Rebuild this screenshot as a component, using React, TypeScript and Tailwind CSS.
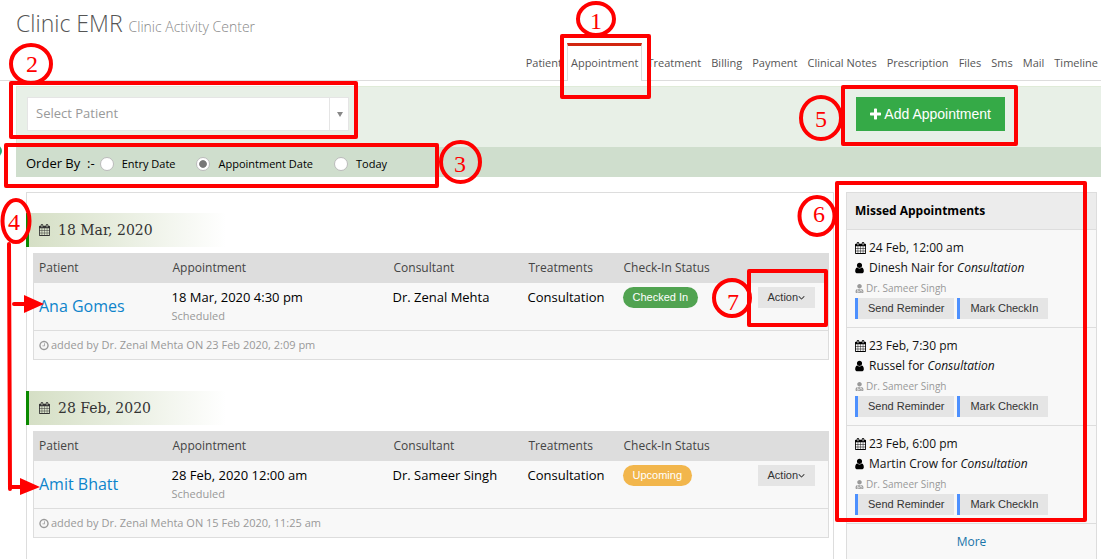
import { useState } from "react";
import { FaUserMd } from "react-icons/fa";

// Font Awesome 4 outlines, drawn on its 1792 unit grid
const icons = {
  calendar: {
    width: 1664,
    path: "M128 1664h288v-288h-288v288zm352 0h320v-288h-320v288zm-352-352h288v-320h-288v320zm352 0h320v-320h-320v320zm-352-384h288v-288h-288v288zm736 736h320v-288h-320v288zm-384-736h320v-288h-320v288zm768 736h288v-288h-288v288zm-384-352h320v-320h-320v320zm-352-864v-288q0-13-9.5-22.5t-22.5-9.5h-64q-13 0-22.5 9.5t-9.5 22.5v288q0 13 9.5 22.5t22.5 9.5h64q13 0 22.5-9.5t9.5-22.5zm736 864h288v-320h-288v320zm-384-384h320v-288h-320v288zm384 0h288v-288h-288v288zm32-480v-288q0-13-9.5-22.5t-22.5-9.5h-64q-13 0-22.5 9.5t-9.5 22.5v288q0 13 9.5 22.5t22.5 9.5h64q13 0 22.5-9.5t9.5-22.5zm384-64v1280q0 52-38 90t-90 38h-1408q-52 0-90-38t-38-90v-1280q0-52 38-90t90-38h128v-96q0-66 47-113t113-47h64q66 0 113 47t47 113v96h384v-96q0-66 47-113t113-47h64q66 0 113 47t47 113v96h128q52 0 90 38t38 90z",
  },
  user: {
    width: 1280,
    path: "M1280 1399q0 109-62.5 187t-150.5 78h-854q-88 0-150.5-78t-62.5-187q0-85 8.5-160.5t31.5-152 58.5-131 94-89 134.5-34.5q131 128 313 128t313-128q76 0 134.5 34.5t94 89 58.5 131 31.5 152 8.5 160.5zm-256-887q0 159-112.5 271.5t-271.5 112.5-271.5-112.5-112.5-271.5 112.5-271.5 271.5-112.5 271.5 112.5 112.5 271.5z",
  },
  plus: {
    width: 1408,
    path: "M1408 800v192q0 40-28 68t-68 28h-416v416q0 40-28 68t-68 28h-192q-40 0-68-28t-28-68v-416h-416q-40 0-68-28t-28-68v-192q0-40 28-68t68-28h416v-416q0-40 28-68t68-28h192q40 0 68 28t28 68v416h416q40 0 68 28t28 68z",
  },
  clock: {
    width: 1536,
    path: "M896 544v448q0 14-9 23t-23 9h-320q-14 0-23-9t-9-23v-64q0-14 9-23t23-9h224v-352q0-14 9-23t23-9h64q14 0 23 9t9 23zm416 352q0-148-73-273t-198-198-273-73-273 73-198 198-73 273 73 273 198 198 273 73 273-73 198-198 73-273zm224 0q0 209-103 385.5t-279.5 279.5-385.5 103-385.5-103-279.5-279.5-103-385.5 103-385.5 279.5-279.5 385.5-103 385.5 103 279.5 279.5 103 385.5z",
  },
  angleDown: {
    width: 1152,
    path: "M1075 736q0 13-10 23l-466 466q-10 10-23 10t-23-10l-466-466q-10-10-10-23t10-23l50-50q10-10 23-10t23 10l393 393 393-393q10-10 23-10t23 10l50 50q10 10 10 23z",
  },
};

type IconProps = {
  name: keyof typeof icons;
  className: string;
};

function Icon({ name, className }: IconProps) {
  return (
    <svg
      className={`shrink-0 ${className}`}
      viewBox={`0 0 ${icons[name].width} 1792`}
      fill="currentColor"
      aria-hidden="true"
    >
      <path d={icons[name].path} />
    </svg>
  );
}

type Appointment = {
  date: string;
  patient: string;
  time: string;
  consultant: string;
  treatment: string;
  status: "Checked In" | "Upcoming";
  added: string;
};

type Missed = {
  time: string;
  patient: string;
  doctor: string;
};

const tabs = [
  "Patient",
  "Appointment",
  "Treatment",
  "Billing",
  "Payment",
  "Clinical Notes",
  "Prescription",
  "Files",
  "Sms",
  "Mail",
  "Timeline",
];

const orders = ["Entry Date", "Appointment Date", "Today"];

const appointments: Appointment[] = [
  {
    date: "18 Mar, 2020",
    patient: "Ana Gomes",
    time: "18 Mar, 2020 4:30 pm",
    consultant: "Dr. Zenal Mehta",
    treatment: "Consultation",
    status: "Checked In",
    added: "added by Dr. Zenal Mehta ON 23 Feb 2020, 2:09 pm",
  },
  {
    date: "28 Feb, 2020",
    patient: "Amit Bhatt",
    time: "28 Feb, 2020 12:00 am",
    consultant: "Dr. Sameer Singh",
    treatment: "Consultation",
    status: "Upcoming",
    added: "added by Dr. Zenal Mehta ON 15 Feb 2020, 11:25 am",
  },
];

const missed: Missed[] = [
  { time: "24 Feb, 12:00 am", patient: "Dinesh Nair", doctor: "Dr. Sameer Singh" },
  { time: "23 Feb, 7:30 pm", patient: "Russel", doctor: "Dr. Sameer Singh" },
  { time: "23 Feb, 6:00 pm", patient: "Martin Crow", doctor: "Dr. Sameer Singh" },
];

function Header() {
  return (
    <header>
      <h1 className="px-4 pt-1.5 pb-0.5 text-[23px] leading-[34px] font-light text-[#555]">
        Clinic EMR <small className="text-sm font-light text-[#888]">Clinic Activity Center</small>
      </h1>
      <nav className="-mr-0.5 flex items-end justify-end border-b border-[#ddd]">
        {tabs.map((tab) => (
          <a
            key={tab}
            href="#"
            className={
              tab === "Appointment"
                ? "-mb-px h-[38px] border-x border-t-3 border-x-[#ddd] border-t-[#d12610] bg-white px-[3px] pt-[5px] text-[11px] leading-6 text-[#555]"
                : "h-[38px] px-[5px] pt-[9px] text-[11px] leading-6 text-[#555]"
            }
          >
            {tab}
          </a>
        ))}
      </nav>
    </header>
  );
}

function Toolbar() {
  const [order, setOrder] = useState("Appointment Date");

  return (
    <section className="mt-[5px] ml-4">
      <div className="flex items-center justify-between border-t border-l border-[#dfebd8] bg-[#e8f0e7] pt-[10px] pr-24 pb-4 pl-[10px]">
        <div className="relative w-[322px]">
          <select
            aria-label="Select Patient"
            className="h-[34px] w-full appearance-none border border-[#e5e5e5] bg-white px-2 text-[13px] text-[#999] outline-none"
          >
            <option>Select Patient</option>
          </select>
          <span className="pointer-events-none absolute inset-y-0 right-0 flex w-5 items-center justify-center border-l border-[#e5e5e5]">
            <svg className="h-[5px] w-[6px]" viewBox="0 0 6 5" fill="#888">
              <path d="M0 0h6L3 5z" />
            </svg>
          </span>
        </div>
        <button className="flex h-[34px] items-center gap-[3px] bg-[#35aa47] px-[14px] font-['Liberation_Sans',sans-serif] text-sm text-white">
          <Icon name="plus" className="h-[14px] w-[11px]" />
          Add Appointment
        </button>
      </div>
      <div className="flex h-[30px] items-center bg-[#cfdecd] pt-1 pl-[10px]">
        <span className="mr-[5px] text-[13px] whitespace-pre text-black">Order By  :-</span>
        {orders.map((item) => (
          <label key={item} className="mr-[21px] flex items-center gap-2 text-[11px] text-black">
            <input
              type="radio"
              name="order"
              checked={order === item}
              onChange={() => setOrder(item)}
              className="size-[14px] appearance-none rounded-full border border-[#bbb] bg-white checked:bg-radial checked:from-[#777] checked:from-40% checked:to-white checked:to-50%"
            />
            {item}
          </label>
        ))}
      </div>
    </section>
  );
}

function AppointmentCard({ item }: { item: Appointment }) {
  return (
    <article className="mb-[31px]">
      <h2 className="-ml-px flex h-[34px] w-[200px] items-center gap-2 border-l-3 border-[#0b8a00] bg-linear-to-r from-[#d5dfc5] to-white pl-[10px] font-['DejaVu_Serif',serif] text-sm text-[#333]">
        <Icon name="calendar" className="h-3 w-[11px]" />
        {item.date}
      </h2>
      <table className="mx-[6px] mt-[6px] w-[calc(100%-10px)] table-fixed border-collapse border border-[#ddd] bg-[#f8f8f8] text-left">
        <colgroup>
          <col className="w-[134px]" />
          <col />
          <col className="w-[135px]" />
          <col className="w-[95px]" />
          <col className="w-[134px]" />
          <col className="w-[76px]" />
        </colgroup>
        <thead>
          <tr className="h-[29px] bg-[#ddd] text-xs text-[#444]">
            <th className="px-[5px] font-normal">Patient</th>
            <th className="px-[5px] font-normal">Appointment</th>
            <th className="px-[5px] font-normal">Consultant</th>
            <th className="px-[5px] font-normal">Treatments</th>
            <th className="px-[5px] font-normal">Check-In Status</th>
            <th aria-label="Action"></th>
          </tr>
        </thead>
        <tbody>
          <tr className="h-12 text-[13px] text-black">
            <td className="px-[5px]">
              <a href="#" className="text-base text-[#0d84cb]">
                {item.patient}
              </a>
            </td>
            <td className="px-1 pt-1 align-top">
              <p className="leading-5">{item.time}</p>
              <p className="text-[11px] leading-[18px] text-[#999]">Scheduled</p>
            </td>
            <td className="px-1 pt-1 align-top leading-5">{item.consultant}</td>
            <td className="px-1 pt-1 align-top leading-5">{item.treatment}</td>
            <td className="px-1 pt-1 align-top">
              <span
                className={
                  item.status === "Checked In"
                    ? "inline-block rounded-full bg-[#51a351] px-[10px] font-['Liberation_Sans',sans-serif] text-[11px] leading-[21px] text-white"
                    : "inline-block rounded-full bg-[#f2b64c] px-[10px] font-['Liberation_Sans',sans-serif] text-[11px] leading-[21px] text-white"
                }
              >
                {item.status}
              </span>
            </td>
            <td className="px-[5px] pt-1 align-top">
              <button className="flex h-[21px] items-center bg-[#e5e5e5] px-[10px] font-['Liberation_Sans',sans-serif] text-[11px] text-[#333]">
                Action
                <Icon name="angleDown" className="h-[11px] w-[7px]" />
              </button>
            </td>
          </tr>
          <tr className="h-[29px] border-t border-[#ddd] text-[11px] text-[#999]">
            <td colSpan={6} className="px-[5px]">
              <span className="flex items-center gap-0.5">
                <Icon name="clock" className="h-[11px] w-[10px]" />
                {item.added}
              </span>
            </td>
          </tr>
        </tbody>
      </table>
    </article>
  );
}

function MissedList() {
  return (
    <aside className="w-[251px] shrink-0 border border-[#ddd] bg-[#f8f8f8] text-[#111]">
      <h2 className="h-9 bg-[#ececec] px-2 text-xs leading-9 font-bold text-black">
        Missed Appointments
      </h2>
      <ul>
        {missed.map((item) => (
          <li key={item.time} className="border-t border-[#ddd] px-2 py-2">
            <p className="flex items-center gap-[3px] text-xs leading-5">
              <Icon name="calendar" className="h-3 w-[11px] text-black" />
              {item.time}
            </p>
            <p className="flex items-center gap-[5px] text-xs leading-5">
              <Icon name="user" className="h-3 w-[9px] text-black" />
              <span>
                {item.patient} for <em>Consultation</em>
              </span>
            </p>
            <p className="flex items-center gap-0.5 text-[10px] leading-5 text-[#999]">
              <FaUserMd className="size-[9px]" />
              {item.doctor}
            </p>
            <div className="flex gap-[3px] font-['Liberation_Sans',sans-serif] text-[11px] text-[#333]">
              <button className="h-[21px] border-l-3 border-[#4d90fe] bg-[#e5e5e5] px-[10px]">
                Send Reminder
              </button>
              <button className="h-[21px] border-l-3 border-[#4d90fe] bg-[#e5e5e5] px-[10px]">
                Mark CheckIn
              </button>
            </div>
          </li>
        ))}
      </ul>
      <a
        href="#"
        className="block border-t border-[#ddd] text-center text-xs leading-9 text-[#1a74a8]"
      >
        More
      </a>
    </aside>
  );
}

// Numbered callouts laid over the page
function Callouts() {
  return (
    <svg
      className="pointer-events-none absolute top-0 left-0"
      width="1101"
      height="559"
      viewBox="0 0 1101 559"
    >
      <circle cx="-4" cy="151" r="6" fill="#2aa876" />
      <g fill="none" stroke="#f00" strokeWidth="4" strokeLinejoin="round">
        <ellipse cx="596" cy="19" rx="18" ry="16" />
        <rect x="562" y="36" width="87" height="61" />
        <ellipse cx="31" cy="64" rx="20" ry="19" />
        <rect x="11" y="83" width="345" height="54" />
        <rect x="6" y="145" width="431" height="41" />
        <ellipse cx="460.5" cy="162" rx="19.5" ry="20" />
        <ellipse cx="16" cy="221" rx="13.5" ry="21" />
        <ellipse cx="821" cy="118" rx="20" ry="21" />
        <rect x="843" y="87" width="173" height="57" />
        <ellipse cx="817" cy="216" rx="17.5" ry="19" />
        <rect x="837" y="183" width="248" height="337" />
        <ellipse cx="732" cy="298" rx="18" ry="18" />
        <rect x="749" y="271" width="77" height="54" />
        <path d="M9 244L10 489M14 304H26M10 487H22" strokeLinecap="round" />
      </g>
      <path d="M24 295L44 304L24 313ZM20 478L40 487L20 495Z" fill="#f00" />
      <g className="font-['Liberation_Serif',serif] text-2xl" fill="#f00" textAnchor="middle">
        <text x="596" y="29">1</text>
        <text x="32" y="72">2</text>
        <text x="460" y="172">3</text>
        <text x="14" y="230">4</text>
        <text x="821" y="127">5</text>
        <text x="819" y="222">6</text>
        <text x="733" y="310">7</text>
      </g>
    </svg>
  );
}

export default function App() {
  return (
    <div className="relative flex h-screen flex-col overflow-hidden bg-white font-['Open_Sans',sans-serif]">
      <Header />
      <Toolbar />
      <main className="mt-[15px] flex gap-3 pr-1 pl-[26px]">
        <div className="flex-1 border border-[#ddd] pt-5">
          {appointments.map((item) => (
            <AppointmentCard key={item.date} item={item} />
          ))}
        </div>
        <MissedList />
      </main>
      <Callouts />
    </div>
  );
}
